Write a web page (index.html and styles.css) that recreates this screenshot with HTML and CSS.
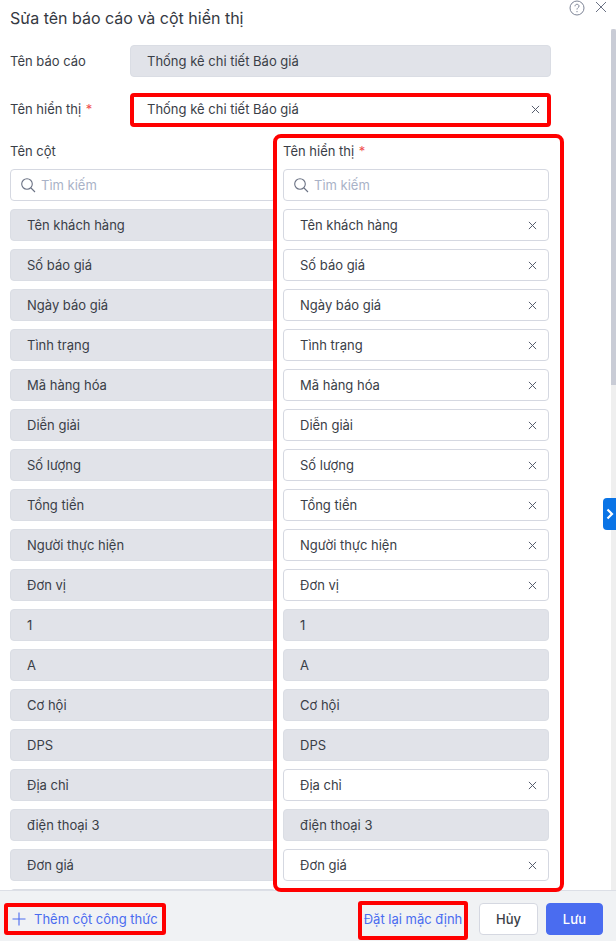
FILE: index.html
```html
<!DOCTYPE html>
<html lang="vi">
<head>
<meta charset="utf-8">
<title>Sửa tên báo cáo và cột hiển thị</title>
<link rel="stylesheet" href="styles.css">
</head>
<body>
<div class="modal">
  <header class="head">
    <h1 class="title">Sửa tên báo cáo và cột hiển thị</h1>
    <div class="head-icons">
      <svg class="icon-help" width="16" height="16" viewBox="0 0 16 16" fill="none" stroke="#7d8496" stroke-width="1"><circle cx="8" cy="8" r="7"/><path d="M6 6.3C6 5 7 4.3 8 4.3s2 .7 2 1.8c0 1.600-2 1.600-2 3.400"/><path d="M8 11v1.200"/></svg>
      <svg class="icon-close" width="12" height="12" viewBox="0 0 12 12" fill="none" stroke="#6b7284" stroke-width="1"><path d="M1 1l10 10M11 1L1 11"/></svg>
    </div>
  </header>

  <main class="content">
    <div class="form-row">
      <label class="form-label">Tên báo cáo</label>
      <div class="field field-disabled field-wide">Thống kê chi tiết Báo giá</div>
    </div>
    <div class="form-row">
      <label class="form-label">Tên hiển thị <span class="req">*</span></label>
      <div class="field field-wide field-marked">Thống kê chi tiết Báo giá
        <svg class="x" viewBox="0 0 10 10"><path d="M1 1l8 8M9 1L1 9"/></svg>
      </div>
    </div>

    <div class="columns">
      <div class="col">
        <div class="col-label">Tên cột</div>
        <div class="field search">
          <svg class="mag" width="16" height="16" viewBox="0 0 16 16" fill="none" stroke="#6b7284" stroke-width="1.1"><circle cx="7" cy="7" r="5.300"/><path d="M11 11l4 4"/></svg>
          <span class="ph">Tìm kiếm</span>
        </div>
        <div class="field field-disabled">Tên khách hàng</div>
        <div class="field field-disabled">Số báo giá</div>
        <div class="field field-disabled">Ngày báo giá</div>
        <div class="field field-disabled">Tình trạng</div>
        <div class="field field-disabled">Mã hàng hóa</div>
        <div class="field field-disabled">Diễn giải</div>
        <div class="field field-disabled">Số lượng</div>
        <div class="field field-disabled">Tổng tiền</div>
        <div class="field field-disabled">Người thực hiện</div>
        <div class="field field-disabled">Đơn vị</div>
        <div class="field field-disabled">1</div>
        <div class="field field-disabled">A</div>
        <div class="field field-disabled">Cơ hội</div>
        <div class="field field-disabled">DPS</div>
        <div class="field field-disabled">Địa chỉ</div>
        <div class="field field-disabled">điện thoại 3</div>
        <div class="field field-disabled">Đơn giá</div>
        <div class="field field-disabled"></div>
      </div>
      <div class="col">
        <div class="col-label">Tên hiển thị <span class="req">*</span></div>
        <div class="field search">
          <svg class="mag" width="16" height="16" viewBox="0 0 16 16" fill="none" stroke="#6b7284" stroke-width="1.1"><circle cx="7" cy="7" r="5.300"/><path d="M11 11l4 4"/></svg>
          <span class="ph">Tìm kiếm</span>
        </div>
        <div class="field">Tên khách hàng<svg class="x" viewBox="0 0 10 10"><path d="M1 1l8 8M9 1L1 9"/></svg></div>
        <div class="field">Số báo giá<svg class="x" viewBox="0 0 10 10"><path d="M1 1l8 8M9 1L1 9"/></svg></div>
        <div class="field">Ngày báo giá<svg class="x" viewBox="0 0 10 10"><path d="M1 1l8 8M9 1L1 9"/></svg></div>
        <div class="field">Tình trạng<svg class="x" viewBox="0 0 10 10"><path d="M1 1l8 8M9 1L1 9"/></svg></div>
        <div class="field">Mã hàng hóa<svg class="x" viewBox="0 0 10 10"><path d="M1 1l8 8M9 1L1 9"/></svg></div>
        <div class="field">Diễn giải<svg class="x" viewBox="0 0 10 10"><path d="M1 1l8 8M9 1L1 9"/></svg></div>
        <div class="field">Số lượng<svg class="x" viewBox="0 0 10 10"><path d="M1 1l8 8M9 1L1 9"/></svg></div>
        <div class="field">Tổng tiền<svg class="x" viewBox="0 0 10 10"><path d="M1 1l8 8M9 1L1 9"/></svg></div>
        <div class="field">Người thực hiện<svg class="x" viewBox="0 0 10 10"><path d="M1 1l8 8M9 1L1 9"/></svg></div>
        <div class="field">Đơn vị<svg class="x" viewBox="0 0 10 10"><path d="M1 1l8 8M9 1L1 9"/></svg></div>
        <div class="field field-disabled">1</div>
        <div class="field field-disabled">A</div>
        <div class="field field-disabled">Cơ hội</div>
        <div class="field field-disabled">DPS</div>
        <div class="field">Địa chỉ<svg class="x" viewBox="0 0 10 10"><path d="M1 1l8 8M9 1L1 9"/></svg></div>
        <div class="field field-disabled">điện thoại 3</div>
        <div class="field">Đơn giá<svg class="x" viewBox="0 0 10 10"><path d="M1 1l8 8M9 1L1 9"/></svg></div>
        <div class="field"></div>
      </div>
    </div>
  </main>

  <footer class="foot">
    <button class="btn-add">
      <svg width="16" height="16" viewBox="0 0 16 16" fill="none" stroke="#4a6cf0" stroke-width="1.100"><path d="M8 1.500v13M1.500 8h13"/></svg>
      Thêm cột công thức
    </button>
    <div class="foot-right">
      <button class="btn-reset">Đặt lại mặc định</button>
      <button class="btn btn-cancel">Hủy</button>
      <button class="btn btn-save">Lưu</button>
    </div>
  </footer>

  <div class="scrollbar"><div class="scroll-thumb"></div></div>
  <div class="side-tab">
    <svg width="8" height="12" viewBox="0 0 8 12" fill="none" stroke="#fff" stroke-width="2.200"><path d="M1.500 1.500L6 6l-4.500 4.500"/></svg>
  </div>
  <div class="column-mark"></div>
</div>
</body>
</html>
```

FILE: styles.css
```css
* { box-sizing: border-box; }
html, body { margin: 0; height: 100%; overflow: hidden; background: #fff; }
body { font-family: Inter, "Noto Sans", sans-serif; font-size: 13px; color: #3a3e47; }

.modal { position: relative; display: flex; flex-direction: column; width: 616px; height: 941px; }

.head { flex: none; height: 29px; padding: 8px 10px 0; display: flex; justify-content: space-between; }
.title { margin: 0; font-size: 16px; font-weight: 400; line-height: 20px; color: #353942; }
.head-icons { position: absolute; top: 0; right: 0; width: 46px; height: 16px; }
.icon-help { position: absolute; left: -1px; top: 0; }
.icon-close { position: absolute; left: 25px; top: 1px; }

.content { flex: 1; min-height: 0; overflow: hidden; padding: 16px 0 0 10px; }

.form-row { display: flex; align-items: center; height: 32px; margin-bottom: 16px; }
.form-label { width: 120px; flex: none; }
.req { color: #f0504f; margin-left: 1px; }

.field { position: relative; display: flex; align-items: center; height: 32px; padding: 0 16px; border: 1px solid #d5d8e1; border-radius: 4px; background: #fff; white-space: nowrap; flex: none; }
.field-disabled { background: #e1e3e9; border-color: #dadde4; }
.field-wide { width: 421px; }
.field-marked { align-self: flex-start; border: 4px solid #ff0000; height: 34px; padding: 0 13px 2px; }
.x { position: absolute; right: 11px; top: 50%; width: 9px; height: 9px; margin-top: -4.500px; fill: none; stroke: #555c6c; stroke-width: 1.100; }
.field-marked .x { right: 7px; top: 12px; }

.columns { display: grid; grid-template-columns: 266px 266px; column-gap: 7px; }
.col { display: flex; flex-direction: column; gap: 8px; min-width: 0; }
.col-label { height: 20px; line-height: 20px; }

.search { padding: 0 10px 0 9px; gap: 5px; }
.mag { flex: none; }
.ph { color: #a9b2c7; }

.foot { flex: none; height: 51px; display: flex; align-items: center; justify-content: space-between; padding: 6px 13px 0 4px; background: #f0f2f4; border-top: 1px solid #dcdfe6; position: relative; }
.foot-right { display: flex; align-items: center; gap: 8px; }

button { font-family: inherit; font-size: 13px; cursor: pointer; }
.btn-add { display: flex; align-items: center; gap: 7px; width: 162px; height: 32px; padding: 0 0 0 3px; border: 4px solid #ff0000; border-radius: 3px; background: transparent; color: #4a6cf0; white-space: nowrap; }
.btn-reset { width: 110px; height: 39px; padding: 0 0 3px; margin-right: 3px; margin-top: 3px; border: 4px solid #ff0000; border-radius: 3px; background: transparent; color: #4a6cf0; white-space: nowrap; }
.btn { height: 32px; border-radius: 4px; padding: 0; font-weight: 500; }
.btn-cancel { width: 59px; background: #fff; border: 1px solid #d5d8e1; color: #3a3e47; }
.btn-save { width: 57px; background: #4a6cf0; border: 1px solid #4a6cf0; color: #fff; }

.scrollbar { position: absolute; top: 29px; right: 0; width: 5px; height: 861px; background: #efefef; }
.scroll-thumb { height: 356px; background: #c9ccd6; border-radius: 2px 2px 0 0; }

.side-tab { position: absolute; left: 603px; top: 498px; width: 13px; height: 32px; display: flex; align-items: center; justify-content: center; background: #0a74e6; border-radius: 4px 0 0 4px; }

.column-mark { position: absolute; left: 273px; top: 134px; width: 291px; height: 758px; border: 4px solid #ff0000; border-radius: 8px; pointer-events: none; }
```
